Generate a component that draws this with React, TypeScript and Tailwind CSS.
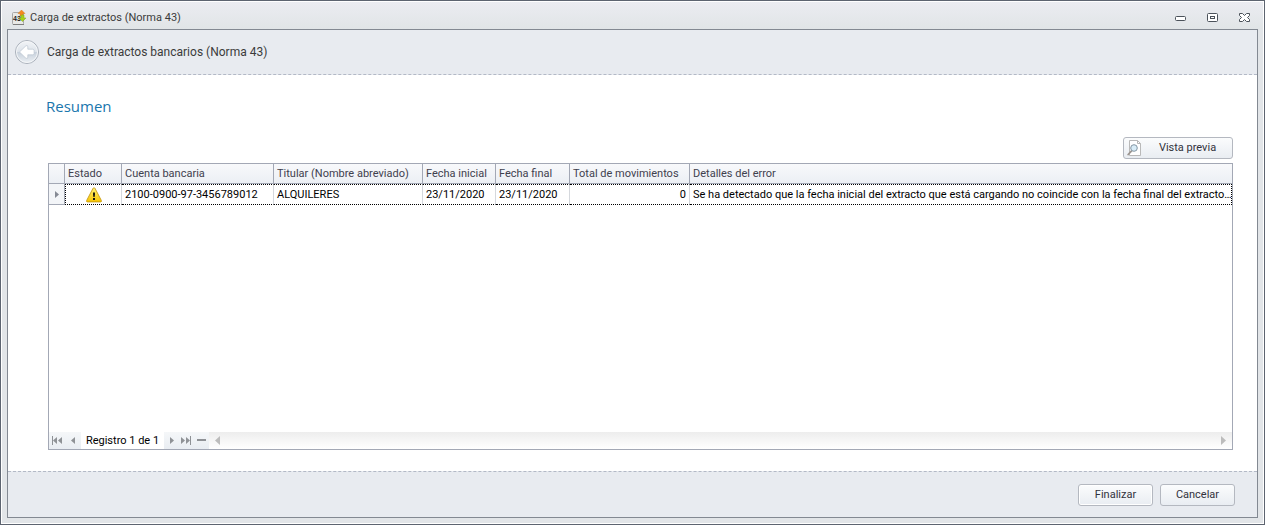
import type { ReactNode } from "react"

interface Statement {
  account: string
  holder: string
  startDate: string
  endDate: string
  movements: number
  error: string
}

const statements: Statement[] = [
  {
    account: "2100-0900-97-3456789012",
    holder: "ALQUILERES",
    startDate: "23/11/2020",
    endDate: "23/11/2020",
    movements: 0,
    error:
      "Se ha detectado que la fecha inicial del extracto que está cargando no coincide con la fecha final del extracto…",
  },
]

function AppIcon() {
  return (
    <svg width="14" height="16" viewBox="0 0 14 16" aria-hidden="true">
      <rect x="0.5" y="2.5" width="11" height="12" rx="1" fill="#e9e9e6" stroke="#a8a8a8" />
      <path d="M1 14.5h11" stroke="#7d7d7d" />
      <text x="1" y="11" fontSize="7" fontWeight="700" fill="#222" fontFamily="Liberation Sans, sans-serif">
        43
      </text>
      <path d="M9.5 0 13 3.5h-2V6H8V3.5H6z" fill="#f58a1f" stroke="#d97a1a" strokeWidth="0.5" />
      <path d="M10.5 11.5 7 8h2V5h3v3h2z" fill="#a5cf1d" stroke="#86a81b" strokeWidth="0.5" />
    </svg>
  )
}

function BackIcon() {
  return (
    <svg width="26" height="26" viewBox="0 0 26 26" aria-hidden="true">
      <defs>
        <linearGradient id="back-fill" x1="0" y1="0" x2="0" y2="1">
          <stop offset="0" stopColor="#f3f5f8" />
          <stop offset="0.48" stopColor="#dde3ea" />
          <stop offset="0.52" stopColor="#c8d1dc" />
          <stop offset="1" stopColor="#edf1f5" />
        </linearGradient>
      </defs>
      <circle cx="13" cy="13" r="11.5" fill="url(#back-fill)" stroke="#a9b0ba" />
      <circle cx="13" cy="13" r="10.5" fill="none" stroke="#f4f6f8" />
      <path
        d="M5.5 13 12 6.7q1.8-.8 1.8 1.2v2.3h4.7q1.6 0 1.6 1.4v2.8q0 1.4-1.6 1.4h-4.7v2.3q0 2-1.8 1.2z"
        fill="#fff"
        stroke="#bcc6d1"
        strokeWidth="0.7"
      />
    </svg>
  )
}

function WarningIcon() {
  return (
    <svg width="16" height="16" viewBox="0 0 16 16" className="mx-auto block" role="img" aria-label="Advertencia">
      <defs>
        <linearGradient id="warning-fill" x1="0" y1="0" x2="0" y2="1">
          <stop offset="0" stopColor="#fff27a" />
          <stop offset="1" stopColor="#f7c400" />
        </linearGradient>
      </defs>
      <path
        d="M8 .8q.7 0 1 .6l6.3 12q.6 1.5-.8 1.5h-13q-1.4 0-.8-1.5L7 1.4q.3-.6 1-.6z"
        fill="url(#warning-fill)"
        stroke="#c79a12"
        strokeWidth="0.9"
      />
      <path d="M7 5.5h2v2.3L8.6 10H7.4L7 7.8zM7 11h2v2H7z" fill="#1c1a10" />
    </svg>
  )
}

function PreviewIcon() {
  return (
    <svg width="16" height="16" viewBox="0 0 16 16" aria-hidden="true">
      <path d="M2.5.5h8l3 3v12h-11z" fill="#fff" stroke="#b9b9b9" />
      <path d="M10.5.5v3h3" fill="none" stroke="#b5b5b5" />
      <path d="m4.6 10.9-3.4 3.6" stroke="#9c9590" strokeWidth="1.8" strokeLinecap="round" />
      <circle cx="7" cy="8" r="3.3" fill="#d9edf8" stroke="#8496a3" />
    </svg>
  )
}

function WindowButton({ label, children }: { label: string; children: ReactNode }) {
  return (
    <button type="button" aria-label={label} className="flex h-4 w-[15px] items-center justify-center">
      <svg width="13" height="11" viewBox="0 0 13 11" fill="none" stroke="#4b525a">
        {children}
      </svg>
    </button>
  )
}

function NavButton({ label, width, children }: { label: string; width: string; children: ReactNode }) {
  return (
    <button
      type="button"
      aria-label={label}
      className={`flex h-[17px] items-center justify-center bg-linear-to-b from-[#f5f7f9] to-[#e9edf2] ${width}`}
    >
      <svg width="11" height="9" viewBox="0 0 11 9" fill="#8f9296">
        {children}
      </svg>
    </button>
  )
}

function DialogButton({ children, focused = false }: { children: ReactNode; focused?: boolean }) {
  return (
    <button
      type="button"
      className={`h-[22px] w-[75px] rounded-[3px] border border-[#b4b8c0] bg-linear-to-b from-[#fbfcfd] to-[#e9edf2] text-[11px] leading-4 text-[#32323c] ${
        focused ? "ring-1 ring-white ring-inset" : ""
      }`}
    >
      {children}
    </button>
  )
}

const headCell = "border-r border-b border-[#a3a8b5] px-[3px] text-left font-normal whitespace-nowrap overflow-hidden"
const bodyCell =
  "border-y border-y-black [border-top-style:dotted] [border-bottom-style:dotted] pl-[3px] whitespace-nowrap overflow-hidden"
const divider = "border-r border-r-[#d5d8dd] pr-[3px]"

function StatementTable() {
  return (
    <table className="w-full table-fixed border-separate border-spacing-0 text-[11px] leading-4">
      <colgroup>
        <col className="w-4" />
        <col className="w-[57px]" />
        <col className="w-[152px]" />
        <col className="w-[149px]" />
        <col className="w-[73px]" />
        <col className="w-[74px]" />
        <col className="w-[120px]" />
        <col />
      </colgroup>
      <thead>
        <tr className="h-5 bg-linear-to-b from-[#f8f9fb] to-[#ebeff4] text-[#3f414e]">
          <td className={headCell} />
          <th className={headCell}>Estado</th>
          <th className={headCell}>Cuenta bancaria</th>
          <th className={headCell}>Titular (Nombre abreviado)</th>
          <th className={headCell}>Fecha inicial</th>
          <th className={headCell}>Fecha final</th>
          <th className={headCell}>Total de movimientos</th>
          <th className="overflow-hidden border-b border-[#a3a8b5] px-[3px] text-left font-normal whitespace-nowrap">
            Detalles del error
          </th>
        </tr>
      </thead>
      <tbody>
        {statements.map((s) => (
          <tr key={s.account} className="h-[21px] text-black">
            <td className="border-r border-b border-[#a3a8b5] bg-[#f3f5f8]">
              <svg width="4" height="7" viewBox="0 0 4 7" className="mx-auto block">
                <path d="M0 0v7l4-3.5z" fill="#858a94" />
              </svg>
            </td>
            <td className={`${bodyCell} ${divider} border-l border-l-black [border-left-style:dotted]`}>
              <WarningIcon />
            </td>
            <td className={`${bodyCell} ${divider}`}>{s.account}</td>
            <td className={`${bodyCell} ${divider}`}>{s.holder}</td>
            <td className={`${bodyCell} ${divider}`}>{s.startDate}</td>
            <td className={`${bodyCell} ${divider}`}>{s.endDate}</td>
            <td className={`${bodyCell} ${divider} text-right`}>{s.movements}</td>
            <td className={`${bodyCell} border-r border-r-black [border-right-style:dotted]`}>{s.error}</td>
          </tr>
        ))}
      </tbody>
    </table>
  )
}

function RecordNavigator() {
  return (
    <div className="flex h-[17px] items-center text-[11px] leading-4 text-black">
      <NavButton label="Primer registro" width="w-4">
        <path d="M0 0h1v9H0zM5 1v7L1 4.5zM10 1v7L6 4.5z" />
      </NavButton>
      <NavButton label="Registro anterior" width="w-4">
        <path d="M7 1v7L3 4.5z" />
      </NavButton>
      <span className="w-[83px] text-center whitespace-nowrap">Registro 1 de 1</span>
      <NavButton label="Registro siguiente" width="w-[15px]">
        <path d="M4 1v7l4-3.5z" />
      </NavButton>
      <NavButton label="Último registro" width="w-[15px]">
        <path d="M9 0h1v9H9zM0 1v7l4-3.5zM5 1v7l4-3.5z" />
      </NavButton>
      <NavButton label="Eliminar" width="w-[15px]">
        <path d="M1 3h9v2H1z" />
      </NavButton>
      <div className="flex h-[17px] flex-1 items-center justify-between bg-linear-to-b from-[#ededed] to-white px-[6px]">
        <button type="button" aria-label="Desplazar a la izquierda">
          <svg width="5" height="9" viewBox="0 0 5 9" className="block">
            <path d="M5 0v9L0 4.5z" fill="#bcbcbc" />
          </svg>
        </button>
        <button type="button" aria-label="Desplazar a la derecha">
          <svg width="5" height="9" viewBox="0 0 5 9" className="block">
            <path d="M0 0v9l5-4.5z" fill="#bcbcbc" />
          </svg>
        </button>
      </div>
    </div>
  )
}

export default function App() {
  return (
    <div className="flex min-h-screen flex-col border border-[#5d6470] bg-[#e2e5e8] font-['Roboto','Open_Sans',sans-serif]">
      <div className="flex flex-1 flex-col border border-white px-[5px] pb-[5px]">
        <header className="-mx-[5px] flex h-[27px] items-center justify-between bg-linear-to-b from-[#ebecf1] to-[#e1e5e7] pr-[11px] pl-[10px]">
          <div className="flex items-center gap-1 pt-1">
            <AppIcon />
            <h1 className="text-[11px] leading-4 text-[#3b3b3b]">Carga de extractos (Norma 43)</h1>
          </div>
          <div className="flex items-center gap-[17px] pt-1">
            <WindowButton label="Minimizar">
              <rect x="1.5" y="4.5" width="10" height="4" rx="1" fill="#fff" />
            </WindowButton>
            <WindowButton label="Maximizar">
              <rect x="1.5" y="1.5" width="10" height="8" rx="1" fill="#fff" />
              <rect x="4.5" y="4.5" width="4" height="2" />
            </WindowButton>
            <WindowButton label="Cerrar">
              <path d="M1.5 1.5h3l2 2 2-2h3v2l-2 2 2 2v2h-3l-2-2-2 2h-3v-2l2-2-2-2z" fill="#fff" />
            </WindowButton>
          </div>
        </header>

        <main className="flex flex-1 flex-col border border-[#838992] bg-white">
          <div className="flex h-[45px] items-center gap-[7px] border-b border-dashed border-[#b3b9c6] bg-[#e8ebf0] pl-[6px]">
            <button type="button" aria-label="Atrás">
              <BackIcon />
            </button>
            <h2 className="text-[12px] leading-4 text-[#3b3b3b]">Carga de extractos bancarios (Norma 43)</h2>
          </div>

          <section className="flex flex-1 flex-col pt-5 pr-6 pb-[21px] pl-10">
            <h3 className="-ml-[2px] font-['Open_Sans',sans-serif] text-[15px] leading-[22px] text-[#1a76ad]">Resumen</h3>
            <button
              type="button"
              className="mt-5 flex h-[22px] w-[110px] items-center self-end rounded-[3px] border border-[#b4b8c0] bg-linear-to-b from-[#fbfcfd] to-[#e9edf2] pl-[3px] text-[11px] leading-4 text-[#32323c]"
            >
              <PreviewIcon />
              <span className="flex-1 text-center">Vista previa</span>
            </button>
            <div className="mt-1 flex flex-1 flex-col justify-between border border-[#a3a8b5]">
              <StatementTable />
              <RecordNavigator />
            </div>
          </section>

          <footer className="flex h-[46px] items-center justify-end gap-[7px] border-t border-dashed border-[#b3b9c6] bg-[#e8ebf0] pr-[22px]">
            <DialogButton focused>Finalizar</DialogButton>
            <DialogButton>Cancelar</DialogButton>
          </footer>
        </main>
      </div>
    </div>
  )
}
